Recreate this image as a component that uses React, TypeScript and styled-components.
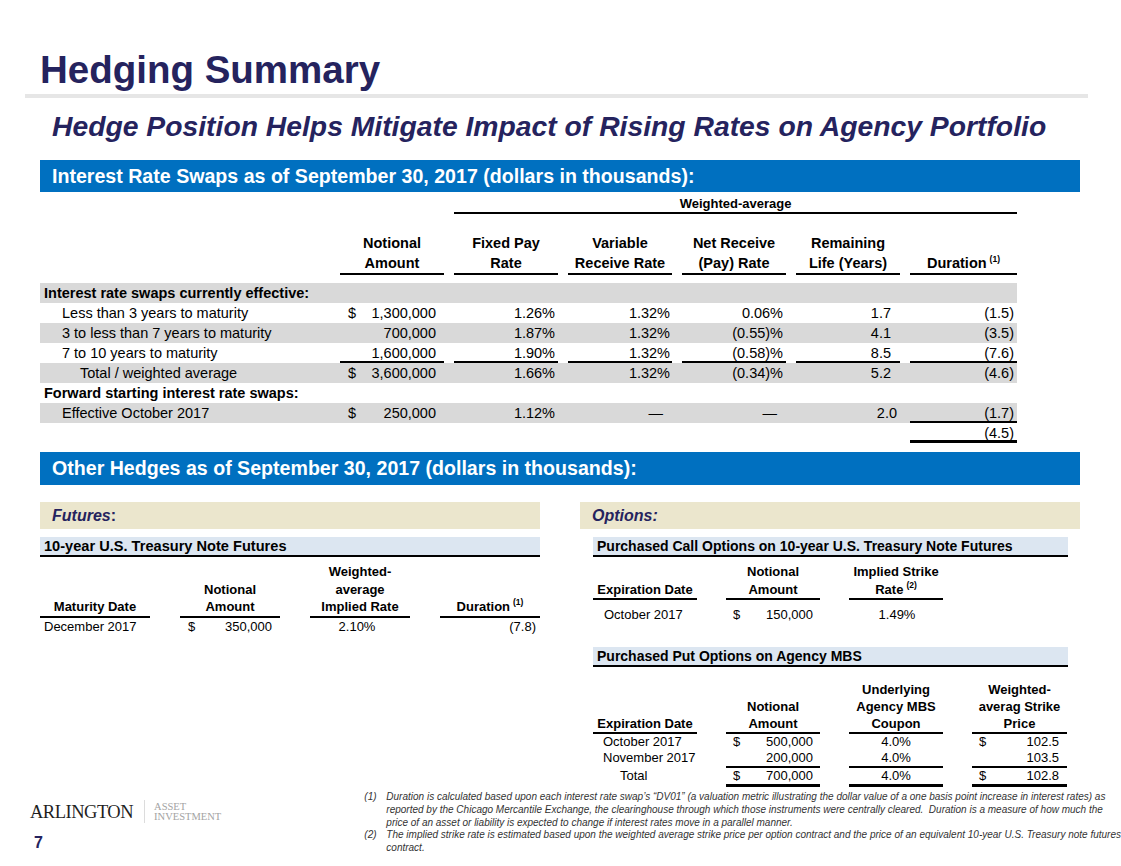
import React from 'react';
import styled, { createGlobalStyle } from 'styled-components';

const GlobalStyle = createGlobalStyle`
  body {
    margin: 0;
    padding: 0;
    background: #ffffff;
    font-family: "Liberation Sans", Arial, sans-serif;
    color: #000000;
  }
`;

const NAVY = '#25235e';

const Page = styled.div`
  width: 1121px;
  height: 866px;
  overflow: hidden;
  background: #ffffff;
`;

const Title = styled.h1`
  margin: 0;
  padding: 50px 0 0 40px;
  font-size: 38.5px;
  line-height: 40px;
  font-weight: bold;
  color: ${NAVY};
`;

const Rule = styled.div`
  margin: 4px 33px 0 25px;
  height: 4px;
  background: #e6e6e6;
`;

const Subtitle = styled.h2`
  margin: 13px 0 0 52px;
  font-size: 28.3px;
  line-height: 30px;
  font-style: italic;
  font-weight: bold;
  color: ${NAVY};
`;

const SectionBar = styled.div<{ $mt: number; $h: number }>`
  margin: ${p => p.$mt}px 41px 0 40px;
  height: ${p => p.$h}px;
  line-height: ${p => p.$h}px;
  padding-left: 12px;
  background: #0070c0;
  color: #ffffff;
  font-size: 19.6px;
  font-weight: bold;
`;

/* ---------- swap table ---------- */

const SwapTable = styled.div`
  margin-left: 40px;
  width: 977px;
  font-size: 14.5px;
`;

const SwapGrid = styled.div<{ $shade?: boolean; $mt?: number }>`
  display: grid;
  grid-template-columns: 290px repeat(5, 104px) 107px;
  column-gap: 10px;
  align-items: end;
  margin-top: ${p => p.$mt ?? 0}px;
  background: ${p => (p.$shade ? '#d9d9d9' : 'transparent')};
`;

const GroupHead = styled.div`
  grid-column: 3 / 8;
  margin-top: 4px;
  text-align: center;
  font-weight: bold;
  font-size: 13px;
  line-height: 16px;
  border-bottom: 2px solid #000;
`;

const ColHead = styled.div`
  text-align: center;
  font-weight: bold;
  line-height: 20px;
  border-bottom: 2px solid #000;
`;

const Sup = styled.sup`
  font-size: 8.5px;
  line-height: 0;
  vertical-align: 6px;
  margin-left: 3px;
`;

const Label = styled.div<{ $pl: number; $bold?: boolean }>`
  height: 20px;
  line-height: 20px;
  padding-left: ${p => p.$pl}px;
  font-weight: ${p => (p.$bold ? 'bold' : 'normal')};
  white-space: nowrap;
`;

const NumCell = styled.div<{ $pr: number; $rule: number }>`
  box-sizing: border-box;
  height: 20px;
  line-height: 20px;
  text-align: right;
  padding-right: ${p => p.$pr}px;
  border-bottom: ${p => (p.$rule ? `${p.$rule}px solid #000` : 'none')};
`;

const MoneyCell = styled.div<{ $pl: number; $pr: number; $rule?: number; $lh?: number }>`
  display: flex;
  justify-content: space-between;
  line-height: ${p => p.$lh ?? 20}px;
  height: ${p => p.$lh ?? 20}px;
  padding: 0 ${p => p.$pr}px 0 ${p => p.$pl}px;
  border-bottom: ${p => (p.$rule ? `${p.$rule}px solid #000` : 'none')};
`;

const SwapMoney = styled(MoneyCell)`
  box-sizing: border-box;
`;

interface SwapLine {
  label: string;
  pl: number;
  bold?: boolean;
  shade?: boolean;
  dollar?: boolean;
  values?: string[];
  rules?: number[];
}

const swapPads = [8, 3, 2, 3, 9, 3];

const swapLines: SwapLine[] = [
  { label: 'Interest rate swaps currently effective:', pl: 4, bold: true, shade: true },
  {
    label: 'Less than 3 years to maturity',
    pl: 22,
    dollar: true,
    values: ['1,300,000', '1.26%', '1.32%', '0.06%', '1.7', '(1.5)'],
  },
  {
    label: '3 to less than 7 years to maturity',
    pl: 22,
    shade: true,
    values: ['700,000', '1.87%', '1.32%', '(0.55)%', '4.1', '(3.5)'],
  },
  {
    label: '7 to 10 years to maturity',
    pl: 22,
    values: ['1,600,000', '1.90%', '1.32%', '(0.58)%', '8.5', '(7.6)'],
    rules: [2, 2, 2, 2, 2, 2],
  },
  {
    label: 'Total / weighted average',
    pl: 40,
    shade: true,
    dollar: true,
    values: ['3,600,000', '1.66%', '1.32%', '(0.34)%', '5.2', '(4.6)'],
  },
  { label: 'Forward starting interest rate swaps:', pl: 4, bold: true },
  {
    label: 'Effective October 2017',
    pl: 22,
    shade: true,
    dollar: true,
    values: ['250,000', '1.12%', '—', '—', '2.0', '(1.7)'],
    rules: [0, 0, 0, 0, 0, 2],
  },
  { label: '', pl: 0, values: ['', '', '', '', '', '(4.5)'], rules: [0, 0, 0, 0, 0, 3] },
];

const padFor = (value: string, i: number) => {
  if (value === '—') return 9;
  if (value === '2.0') return 3;
  return swapPads[i];
};

const SwapRow: React.FC<{ line: SwapLine }> = ({ line }) => {
  const values = line.values ?? ['', '', '', '', '', ''];
  const rules = line.rules ?? [0, 0, 0, 0, 0, 0];
  return (
    <SwapGrid $shade={line.shade}>
      <Label $pl={line.pl} $bold={line.bold}>{line.label}</Label>
      {values.map((v, i) =>
        i === 0 ? (
          <SwapMoney key={i} $pl={8} $pr={swapPads[0]} $rule={rules[0]}>
            <span>{line.dollar ? '$' : ''}</span>
            <span>{v}</span>
          </SwapMoney>
        ) : (
          <NumCell key={i} $pr={padFor(v, i)} $rule={rules[i]}>
            {v}
          </NumCell>
        )
      )}
    </SwapGrid>
  );
};

/* ---------- other hedges ---------- */

const HedgeRow = styled.div`
  display: flex;
  gap: 40px;
  margin-left: 40px;
`;

const HedgeCol = styled.div`
  width: 500px;
`;

const KindBar = styled.div`
  margin-top: 17px;
  height: 27px;
  line-height: 27px;
  padding-left: 12px;
  background: #ebe6cd;
  color: ${NAVY};
  font-size: 16px;
  font-weight: bold;
  font-style: italic;
`;

const Colon = styled.span`
  font-style: normal;
`;

const SubBar = styled.div<{ $mt: number; $ml: number; $w: number; $fs?: number }>`
  margin: ${p => p.$mt}px 0 0 ${p => p.$ml}px;
  width: ${p => p.$w}px;
  box-sizing: border-box;
  height: 20px;
  line-height: 18px;
  padding-left: 4px;
  background: #dce6f1;
  border-bottom: 2px solid #000;
  font-size: ${p => p.$fs ?? 14}px;
  font-weight: bold;
  white-space: nowrap;
`;

const SmallGrid = styled.div<{ $cols: string; $gap: number; $mt?: number; $ml?: number }>`
  display: grid;
  grid-template-columns: ${p => p.$cols};
  column-gap: ${p => p.$gap}px;
  align-items: start;
  margin: ${p => p.$mt ?? 0}px 0 0 ${p => p.$ml ?? 0}px;
  font-size: 13px;
`;

const HeadGrid = styled(SmallGrid)`
  align-items: end;
`;

const SmallHead = styled.div<{ $lh?: number }>`
  text-align: center;
  font-weight: bold;
  line-height: ${p => p.$lh ?? 17.5}px;
  border-bottom: 2px solid #000;
`;

const SmallCell = styled.div<{
  $align: 'left' | 'center' | 'right';
  $pl?: number;
  $pr?: number;
  $lh: number;
  $rule?: number;
}>`
  height: ${p => p.$lh}px;
  line-height: ${p => p.$lh}px;
  text-align: ${p => p.$align};
  padding: 0 ${p => p.$pr ?? 0}px 0 ${p => p.$pl ?? 0}px;
  border-bottom: ${p => (p.$rule ? `${p.$rule}px solid #000` : 'none')};
  white-space: nowrap;
`;

const OPT_COLS = '104px 94px 94px 95px';

interface PutLine {
  date: string;
  pl: number;
  dollar: boolean;
  notional: string;
  coupon: string;
  price: string;
  rule: number;
}

const putLines: PutLine[] = [
  { date: 'October 2017', pl: 10, dollar: true, notional: '500,000', coupon: '4.0%', price: '102.5', rule: 0 },
  { date: 'November 2017', pl: 10, dollar: false, notional: '200,000', coupon: '4.0%', price: '103.5', rule: 2 },
  { date: 'Total', pl: 27, dollar: true, notional: '700,000', coupon: '4.0%', price: '102.8', rule: 3 },
];

/* ---------- footer ---------- */

const Footer = styled.div`
  display: flex;
`;

const Brand = styled.div`
  width: 365px;
  padding-top: 13px;
`;

const LogoRow = styled.div`
  display: flex;
  align-items: center;
  padding-left: 30px;
`;

const LogoWord = styled.div`
  font-family: "Liberation Serif", "Times New Roman", serif;
  font-size: 18.5px;
  line-height: 22px;
  letter-spacing: -0.5px;
  color: #1f1f1f;
`;

const LogoDivider = styled.div`
  width: 1px;
  height: 23px;
  margin: 0 9px 0 11px;
  background: #dcdcdc;
`;

const LogoSub = styled.div`
  font-family: "Liberation Serif", "Times New Roman", serif;
  font-size: 10.5px;
  line-height: 10px;
  color: #a3a3a3;
`;

const PageNum = styled.div`
  margin: 11px 0 0 34px;
  font-size: 16px;
  line-height: 18px;
  font-weight: bold;
  color: ${NAVY};
`;

const Notes = styled.div`
  padding-top: 4px;
  font-size: 10px;
  font-style: italic;
  line-height: 12.8px;
  color: #333333;
`;

const Note = styled.div`
  display: grid;
  grid-template-columns: 22px auto;
`;

const NoteText = styled.div`
  white-space: pre;
`;

const App: React.FC = () => {
  return (
    <>
      <GlobalStyle />
      <Page>
        <Title>Hedging Summary</Title>
        <Rule />
        <Subtitle>Hedge Position Helps Mitigate Impact of Rising Rates on Agency Portfolio</Subtitle>

        <SectionBar $mt={19} $h={32}>
          Interest Rate Swaps as of September 30, 2017 (dollars in thousands):
        </SectionBar>

        <SwapTable>
          <SwapGrid>
            <GroupHead>Weighted-average</GroupHead>
          </SwapGrid>
          <SwapGrid $mt={19}>
            <div />
            <ColHead>Notional<br />Amount</ColHead>
            <ColHead>Fixed Pay<br />Rate</ColHead>
            <ColHead>Variable<br />Receive Rate</ColHead>
            <ColHead>Net Receive<br />(Pay) Rate</ColHead>
            <ColHead>Remaining<br />Life (Years)</ColHead>
            <ColHead>Duration<Sup>(1)</Sup></ColHead>
          </SwapGrid>
          <div style={{ height: 8 }} />
          {swapLines.map((line, i) => (
            <SwapRow key={i} line={line} />
          ))}
        </SwapTable>

        <SectionBar $mt={9} $h={33}>
          Other Hedges as of September 30, 2017 (dollars in thousands):
        </SectionBar>

        <HedgeRow>
          <HedgeCol>
            <KindBar>Futures<Colon>:</Colon></KindBar>
            <SubBar $mt={8} $ml={0} $w={500} $fs={14.6}>10-year U.S. Treasury Note Futures</SubBar>
            <HeadGrid $cols="110px 100px 100px 100px" $gap={30} $mt={6}>
              <SmallHead>Maturity Date</SmallHead>
              <SmallHead>Notional<br />Amount</SmallHead>
              <SmallHead>Weighted-<br />average<br />Implied Rate</SmallHead>
              <SmallHead>Duration<Sup>(1)</Sup></SmallHead>
            </HeadGrid>
            <SmallGrid $cols="110px 100px 100px 100px" $gap={30}>
              <SmallCell $align="left" $pl={4} $lh={17}>December 2017</SmallCell>
              <MoneyCell $pl={8} $pr={8} $lh={17}>
                <span>$</span>
                <span>350,000</span>
              </MoneyCell>
              <SmallCell $align="center" $pr={6} $lh={17}>2.10%</SmallCell>
              <SmallCell $align="right" $pr={4} $lh={17}>(7.8)</SmallCell>
            </SmallGrid>
          </HedgeCol>

          <HedgeCol>
            <KindBar>Options:</KindBar>
            <SubBar $mt={8} $ml={13} $w={475}>Purchased Call Options on 10-year U.S. Treasury Note Futures</SubBar>
            <HeadGrid $cols={OPT_COLS} $gap={29} $mt={6} $ml={13}>
              <SmallHead>Expiration Date</SmallHead>
              <SmallHead>Notional<br />Amount</SmallHead>
              <SmallHead>Implied Strike<br />Rate<Sup>(2)</Sup></SmallHead>
              <div />
            </HeadGrid>
            <SmallGrid $cols={OPT_COLS} $gap={29} $mt={6} $ml={13}>
              <SmallCell $align="left" $pl={11} $lh={17}>October 2017</SmallCell>
              <MoneyCell $pl={7} $pr={7} $lh={17}>
                <span>$</span>
                <span>150,000</span>
              </MoneyCell>
              <SmallCell $align="center" $pl={2} $lh={17}>1.49%</SmallCell>
              <div />
            </SmallGrid>

            <SubBar $mt={24} $ml={13} $w={475}>Purchased Put Options on Agency MBS</SubBar>
            <HeadGrid $cols={OPT_COLS} $gap={29} $mt={14} $ml={13}>
              <SmallHead $lh={17}>Expiration Date</SmallHead>
              <SmallHead $lh={17}>Notional<br />Amount</SmallHead>
              <SmallHead $lh={17}>Underlying<br />Agency MBS<br />Coupon</SmallHead>
              <SmallHead $lh={17}>Weighted-<br />averag Strike<br />Price</SmallHead>
            </HeadGrid>
            <SmallGrid $cols={OPT_COLS} $gap={29} $ml={13}>
              {putLines.map(line => (
                <React.Fragment key={line.date}>
                  <SmallCell $align="left" $pl={line.pl} $lh={16}>
                    {line.date}
                  </SmallCell>
                  <MoneyCell $pl={7} $pr={7} $lh={16} $rule={line.rule}>
                    <span>{line.dollar ? '$' : ''}</span>
                    <span>{line.notional}</span>
                  </MoneyCell>
                  <SmallCell $align="center" $lh={16} $rule={line.rule}>
                    {line.coupon}
                  </SmallCell>
                  <MoneyCell $pl={7} $pr={8} $lh={16} $rule={line.rule}>
                    <span>{line.dollar ? '$' : ''}</span>
                    <span>{line.price}</span>
                  </MoneyCell>
                </React.Fragment>
              ))}
            </SmallGrid>
          </HedgeCol>
        </HedgeRow>

        <Footer>
          <Brand>
            <LogoRow>
              <LogoWord>ARLINGTON</LogoWord>
              <LogoDivider />
              <LogoSub>ASSET<br />INVESTMENT</LogoSub>
            </LogoRow>
            <PageNum>7</PageNum>
          </Brand>
          <Notes>
            <Note>
              <span>(1)</span>
              <NoteText>
                {'Duration is calculated based upon each interest rate swap’s “DV01” (a valuation metric illustrating the dollar value of a one basis point increase in interest rates) as\n' +
                  'reported by the Chicago Mercantile Exchange, the clearinghouse through which those instruments were centrally cleared.  Duration is a measure of how much the\n' +
                  'price of an asset or liability is expected to change if interest rates move in a parallel manner.'}
              </NoteText>
            </Note>
            <Note>
              <span>(2)</span>
              <NoteText>
                {'The implied strike rate is estimated based upon the weighted average strike price per option contract and the price of an equivalent 10-year U.S. Treasury note futures\n' +
                  'contract.'}
              </NoteText>
            </Note>
          </Notes>
        </Footer>
      </Page>
    </>
  );
};

export default App;
